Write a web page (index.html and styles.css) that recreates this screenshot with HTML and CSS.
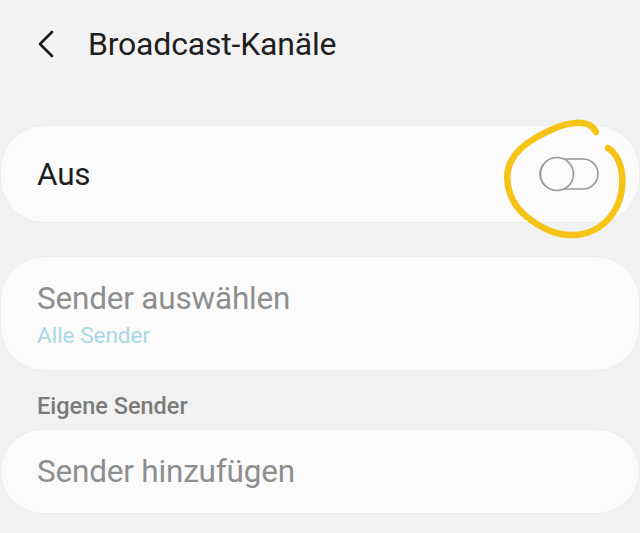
FILE: index.html
```html
<!DOCTYPE html>
<html lang="de">

<head>
    <meta charset="UTF-8">
    <meta name="viewport" content="width=device-width, initial-scale=1.0">
    <title>Broadcast-Kanäle</title>
    <link rel="stylesheet" href="styles.css">
</head>

<body>
    <div class="header">
        <svg class="back" width="20" height="28" viewBox="0 0 20 28">
            <path d="M16 2 L4 14 L16 26" fill="none" stroke="#1a1a1a" stroke-width="2.6" stroke-linecap="round" stroke-linejoin="round"/>
        </svg>
        <h1 class="title">Broadcast-Kanäle</h1>
    </div>

    <div class="card switchCard">
        <span class="mainText">Aus</span>
        <div class="switchWrap">
            <svg class="switch" width="62" height="38" viewBox="0 0 62 38">
                <rect x="3" y="4" width="58" height="30" rx="15" fill="none" stroke="#9a9a9a" stroke-width="1.6"/>
                <circle cx="20" cy="19" r="16.5" fill="#fbfbfb" stroke="#9a9a9a" stroke-width="1.6"/>
            </svg>
            <!-- hand-drawn highlight -->
            <svg class="mark" width="132" height="132" viewBox="0 0 132 132">
                <path d="M99 22 C95 14 86 12 78 13 C66 14 52 20 40 27 C26 35 14 45 11 60 C8 76 14 94 30 107 C45 119 62 126 78 125 C96 124 110 114 118 100 C125 88 127 72 124 58 C122 49 117 42 111 38" fill="none" stroke="#f6c417" stroke-width="6.5" stroke-linecap="round" stroke-linejoin="round"/>
            </svg>
        </div>
    </div>

    <div class="card selectCard">
        <div class="mainText grey">Sender auswählen</div>
        <div class="subText">Alle Sender</div>
    </div>

    <div class="sectionTitle">Eigene Sender</div>

    <div class="card addCard">
        <span class="mainText grey">Sender hinzufügen</span>
    </div>
</body>

</html>
```

FILE: styles.css
```css
* {
    margin: 0;
    padding: 0;
    box-sizing: border-box;
}

body {
    width: 640px;
    height: 533px;
    overflow: hidden;
    background-color: #f2f2f2;
    font-family: Roboto, "Noto Sans", sans-serif;
    color: #1f1f1f;
}

.header {
    display: flex;
    align-items: center;
    height: 90px;
    padding-left: 36px;
    padding-bottom: 2px;
}

.header .back {
    margin-right: 32px;
}

.header .title {
    font-size: 32px;
    font-weight: 400;
    letter-spacing: -0.2px;
    color: #1f1f1f;
}

.card {
    background-color: #fbfbfb;
    border-radius: 44px;
    border: 1px solid #ececec;
    padding: 0 36px;
}

.switchCard {
    display: flex;
    align-items: center;
    justify-content: space-between;
    margin-top: 35px;
    height: 98px;
}

.mainText {
    font-size: 31.5px;
    letter-spacing: -0.2px;
    color: #1f1f1f;
}

.mainText.grey {
    color: #8e8e8e;
}

.switchWrap {
    position: relative;
    width: 62px;
    height: 38px;
    margin-right: 4px;
}

.switch {
    display: block;
}

.mark {
    position: absolute;
    left: -40px;
    top: -45px;
}

.selectCard {
    margin-top: 33px;
    height: 115px;
    padding-top: 23px;
}

.subText {
    margin-top: 5px;
    font-size: 22.5px;
    color: #a9d8e6;
}

.sectionTitle {
    padding: 21px 37px 0;
    height: 58px;
    font-size: 23.5px;
    font-weight: 500;
    color: #7b7b7b;
}

.addCard {
    display: flex;
    align-items: center;
    height: 85px;
}
```
